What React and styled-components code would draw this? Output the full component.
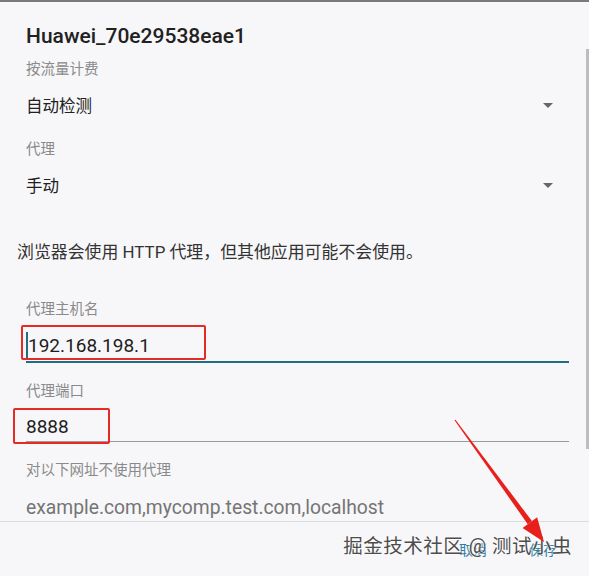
import styled, { createGlobalStyle } from "styled-components";

const GlobalStyle = createGlobalStyle`
  html, body {
    margin: 0;
    padding: 0;
    background: #f7f7f9;
  }
  body {
    font-family: Roboto, "Noto Sans CJK SC", sans-serif;
  }
`;

const Dialog = styled.div`
  position: relative;
  width: 589px;
  height: 576px;
  box-sizing: border-box;
  border-top: 2px solid #7a7a7a;
  background: #f7f7f9;
  overflow: hidden;
  display: flex;
  flex-direction: column;
`;

const Content = styled.div`
  flex: 1;
  padding: 0 20px 0 26px;
  display: flex;
  flex-direction: column;
`;

const Title = styled.h2`
  margin: 20px 0 0;
  font-size: 21px;
  line-height: 28px;
  font-weight: 500;
  color: #212121;
`;

const Label = styled.div`
  margin-top: ${(p) => p.$gap}px;
  height: 20px;
  line-height: 20px;
  font-size: 14.5px;
  color: #8a8a8a;
`;

const SelectRow = styled.div`
  margin-top: 10px;
  height: 30px;
  display: flex;
  align-items: center;
  justify-content: space-between;
  padding-right: 16px;
  font-size: 16.5px;
  color: #212121;
`;

const Caret = styled.span`
  width: 0;
  height: 0;
  border-left: 5px solid transparent;
  border-right: 5px solid transparent;
  border-top: 5px solid #666;
`;

const Note = styled.p`
  margin: 40px 0 0 -9px;
  height: 24px;
  line-height: 24px;
  font-size: 16.9px;
  color: #333;
`;

const Field = styled.div`
  position: relative;
  margin-top: ${(p) => p.$gap}px;
  display: flex;
  align-items: center;
  height: 24px;
  padding-bottom: ${(p) => p.$pad}px;
  border-bottom: ${(p) => (p.$line ? `${p.$line}px solid ${p.$color}` : "none")};
  font-size: ${(p) => (p.$hint ? 19.3 : 19)}px;
  color: ${(p) => (p.$hint ? "#757575" : "#1d1d1d")};
  white-space: nowrap;
`;

const Cursor = styled.span`
  width: 2px;
  height: 26px;
  background: #1f6f84;
`;

const Highlight = styled.span`
  position: absolute;
  box-sizing: border-box;
  border: 2px solid #e62b26;
  border-radius: 2px;
  pointer-events: none;
`;

const ButtonBar = styled.div`
  height: 54px;
  border-top: 1px solid #dcdcdc;
  display: flex;
  justify-content: flex-end;
  align-items: center;
  gap: 42px;
  padding: 0 32px 0 0;
`;

const TextButton = styled.button`
  border: none;
  background: none;
  padding: 0;
  font-family: inherit;
  font-size: 14px;
  color: #2a7fa3;
  cursor: pointer;
`;

const Scrollbar = styled.span`
  position: absolute;
  right: 0;
  top: 47px;
  width: 3px;
  height: 400px;
  background: #bdbdbd;
`;

const Watermark = styled.span`
  position: absolute;
  right: 17px;
  bottom: 17px;
  font-size: 19.5px;
  color: #4d4d4d;
  letter-spacing: 0.5px;
  text-shadow: 0 0 2px #fff, 0 0 2px #fff;
  pointer-events: none;
`;

const Overlay = styled.svg`
  position: absolute;
  left: 0;
  top: -2px;
  pointer-events: none;
`;

function Arrow() {
  const sx = 455, sy = 420, tx = 544, ty = 542;
  const dx = tx - sx, dy = ty - sy;
  const len = Math.hypot(dx, dy);
  const ux = dx / len, uy = dy / len;
  const px = -uy, py = ux;
  const bx = tx - 24 * ux, by = ty - 24 * uy;
  const shaft = [
    [sx + 0.6 * px, sy + 0.6 * py],
    [bx + 2.6 * px, by + 2.6 * py],
    [bx - 2.6 * px, by - 2.6 * py],
    [sx - 0.6 * px, sy - 0.6 * py],
  ];
  const head = [
    [tx, ty],
    [bx + 9 * px, by + 9 * py],
    [bx - 9 * px, by - 9 * py],
  ];
  const pts = (a) => a.map((p) => p.join(",")).join(" ");
  return (
    <Overlay width="589" height="576" viewBox="0 0 589 576">
      <polygon points={pts(shaft)} fill="#e8201c" />
      <polygon points={pts(head)} fill="#e8201c" />
    </Overlay>
  );
}

export default function App() {
  return (
    <>
      <GlobalStyle />
      <Dialog>
        <Content>
          <Title>Huawei_70e29538eae1</Title>
          <Label $gap={10}>按流量计费</Label>
          <SelectRow>
            <span>自动检测</span>
            <Caret />
          </SelectRow>
          <Label $gap={20}>代理</Label>
          <SelectRow>
            <span>手动</span>
            <Caret />
          </SelectRow>
          <Note>浏览器会使用 HTTP 代理，但其他应用可能不会使用。</Note>
          <Label $gap={36}>代理主机名</Label>
          <Field $gap={13} $pad={4} $line={2} $color="#1f6f84">
            <Cursor />
            <span>192.168.198.1</span>
            <Highlight style={{ left: -5, top: -8, width: 185, height: 35 }} />
          </Field>
          <Label $gap={19}>代理端口</Label>
          <Field $gap={12} $pad={3} $line={1} $color="#9a9a9a">
            <span>8888</span>
            <Highlight style={{ left: -13, top: -6, width: 97, height: 36 }} />
          </Field>
          <Label $gap={19}>对以下网址不使用代理</Label>
          <Field $gap={14} $pad={2} $hint>
            example.com,mycomp.test.com,localhost
          </Field>
        </Content>
        <ButtonBar>
          <TextButton>取消</TextButton>
          <TextButton>保存</TextButton>
        </ButtonBar>
        <Scrollbar />
        <Watermark>掘金技术社区 @ 测试小虫</Watermark>
        <Arrow />
      </Dialog>
    </>
  );
}
